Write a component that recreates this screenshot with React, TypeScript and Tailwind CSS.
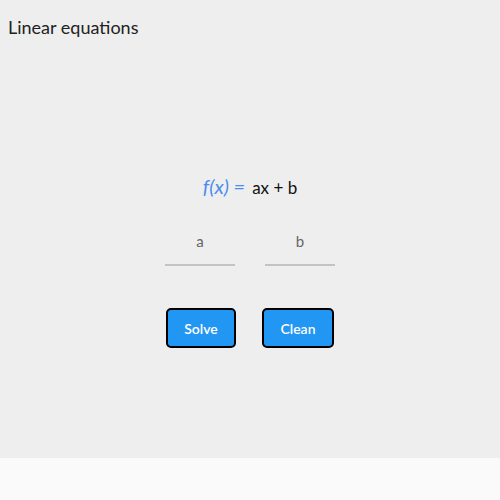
import React, { useState } from 'react';

const App: React.FC = () => {
  const [a, setA] = useState('');
  const [b, setB] = useState('');

  return (
    <div className="w-[500px] h-[500px] flex flex-col bg-[#fafafa] font-['Lato',sans-serif]">
      <div className="h-[458px] bg-[#eeeeee] flex flex-col">
        <h1 className="pl-2 pt-[15px] text-[18px] leading-[24px] text-[#222]">Linear equations</h1>

        <div className="mt-[135px] flex justify-center items-baseline leading-[24px]">
          <span className="italic text-[20px] text-[#4a8df0] mr-[7px]">f(x) =</span>
          <span className="text-[17px] text-[#111]">ax + b</span>
        </div>

        <div className="mt-[21px] flex justify-center gap-[30px]">
          <input
            value={a}
            onChange={(e) => setA(e.target.value)}
            placeholder="a"
            className="w-[70px] h-[45px] bg-transparent text-center text-[15px] text-[#555] placeholder:text-[#666] border-b-2 border-[#c4c4c4] outline-none pb-[4px]"
          />
          <input
            value={b}
            onChange={(e) => setB(e.target.value)}
            placeholder="b"
            className="w-[70px] h-[45px] bg-transparent text-center text-[15px] text-[#555] placeholder:text-[#666] border-b-2 border-[#c4c4c4] outline-none pb-[4px]"
          />
        </div>

        <div className="mt-[42px] flex justify-center gap-[26px]">
          <button className="w-[70px] h-[40px] rounded-[5px] border-2 border-black bg-[#2196f3] text-white text-[14px] font-semibold">
            Solve
          </button>
          <button
            onClick={() => {
              setA('');
              setB('');
            }}
            className="w-[72px] h-[40px] rounded-[5px] border-2 border-black bg-[#2196f3] text-white text-[14px] font-semibold"
          >
            Clean
          </button>
        </div>
      </div>
    </div>
  );
};

export default App;
